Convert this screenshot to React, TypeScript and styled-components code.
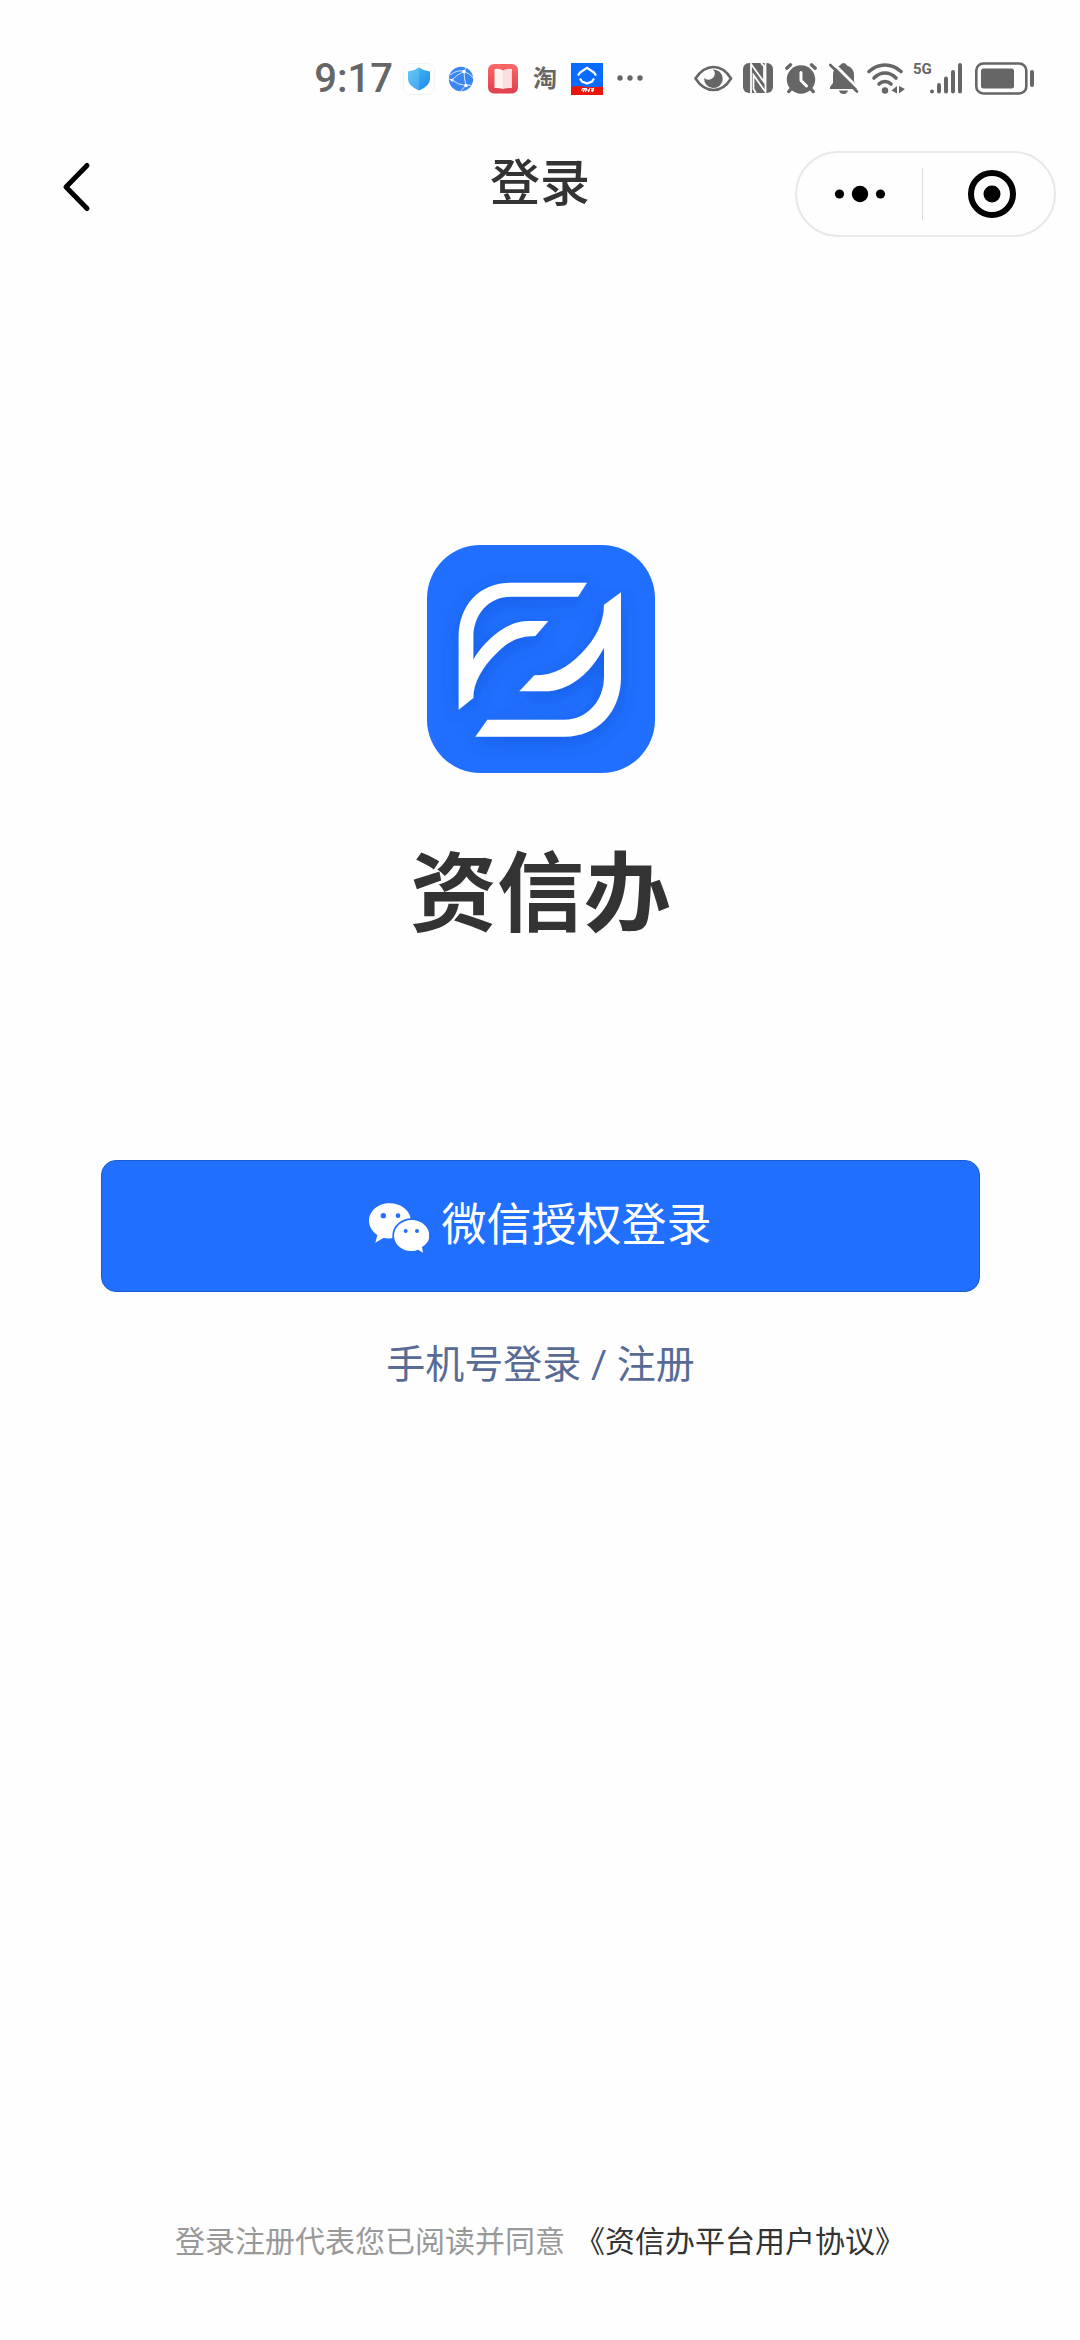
import React from "react";
import styled, { createGlobalStyle } from "styled-components";

const GlobalStyle = createGlobalStyle`
  * { box-sizing: border-box; }
  html, body { margin: 0; padding: 0; background: #fefefe; }
  body {
    font-family: Roboto, "Noto Sans CJK SC", sans-serif;
    color: #333333;
  }
  button { font: inherit; color: inherit; background: none; border: 0; padding: 0; cursor: pointer; }
  a { color: inherit; text-decoration: none; }
  svg { display: block; flex: none; }
`;

const Page = styled.div`
  min-height: 100vh;
  display: flex;
  flex-direction: column;
`;

const StatusBar = styled.div`
  display: flex;
  align-items: center;
  justify-content: flex-end;
  padding: 61px 45px 19px;
  height: 116px;
  color: #666666;
`;

const Clock = styled.time`
  font-size: 40px;
  line-height: 36px;
  font-weight: 500;
  margin-right: 10px;
`;

const IconGroup = styled.div<{ $gap: number }>`
  display: flex;
  align-items: center;
  gap: ${(p) => p.$gap}px;
`;

const TaoBadge = styled.span`
  width: 32px;
  font-size: 24px;
  line-height: 36px;
  font-weight: 700;
  text-align: center;
`;

const SystemIcons = styled(IconGroup)`
  margin-left: 49px;
`;

const NavBar = styled.header`
  display: grid;
  grid-template-columns: 1fr auto 1fr;
  align-items: start;
  padding: 35px 24px 0;
`;

const BackButton = styled.button`
  width: 72px;
  height: 72px;
  display: flex;
  align-items: center;
  justify-content: center;
  margin-left: 16px;
`;

const Title = styled.h1`
  margin: 0;
  font-size: 50px;
  line-height: 66px;
  font-weight: 500;
`;

const Capsule = styled.div`
  justify-self: end;
  display: flex;
  align-items: center;
  width: 261px;
  height: 86px;
  border: 2px solid #e8e8e8;
  border-radius: 43px;
`;

const CapsuleButton = styled.button`
  flex: 1;
  height: 100%;
  display: flex;
  align-items: center;
  justify-content: center;
`;

const CloseButton = styled(CapsuleButton)`
  padding-left: 6px;
`;

const CapsuleDivider = styled.span`
  width: 1px;
  height: 52px;
  background: #dcdcdc;
`;

const Main = styled.main`
  display: flex;
  flex-direction: column;
  align-items: center;
  padding: 308px 100px 0 101px;
`;

const BrandName = styled.h2`
  margin: 72px 0 0;
  font-size: 87px;
  line-height: 100px;
  font-weight: 700;
`;

const WechatButton = styled.button`
  width: 100%;
  height: 132px;
  margin-top: 215px;
  padding-top: 4px;
  display: flex;
  align-items: center;
  justify-content: center;
  gap: 12px;
  background: #206fff;
  border: 1px solid #1b5ccf;
  border-radius: 15px;
  color: #ffffff;
  font-size: 45px;
`;

const ButtonLabel = styled.span`
  line-height: 60px;
  padding-bottom: 4px;
`;

const PhoneLink = styled.a`
  margin-top: 43px;
  font-size: 39px;
  line-height: 60px;
  color: #576b95;
`;

const Footer = styled.footer`
  margin-top: auto;
  padding: 0 24px 76px;
  display: flex;
  justify-content: center;
  gap: 10px;
  font-size: 30px;
  line-height: 44px;
  color: #999999;
`;

const AgreementLink = styled.a`
  color: #333333;
`;

const ShieldIcon = () => (
  <svg width="32" height="36" viewBox="0 0 32 36" aria-hidden="true">
    <defs>
      <linearGradient id="shield" x1="0" x2="1" y1="0" y2="1">
        <stop offset="0" stopColor="#4cc2f5" />
        <stop offset="1" stopColor="#1c86ee" />
      </linearGradient>
    </defs>
    <rect x=".5" y="2.5" width="31" height="31" rx="7" fill="#fff" stroke="#f3f3f3" />
    <path d="M16 6.5Q21 10 27 10.5V18Q27 25 16 29.500Q5 25 5 18V10.500Q11 10 16 6.500Z" fill="url(#shield)" />
    <path d="M16 6.500Q11 10 5 10.500V18Q5 25 16 29.500Z" fill="#fff" opacity=".14" />
  </svg>
);

const GlobeIcon = () => (
  <svg width="32" height="36" viewBox="0 0 32 36" aria-hidden="true">
    <circle cx="16" cy="18" r="12.200" fill="#3c86f2" />
    <g fill="none" stroke="#d5e6ff" strokeWidth="1">
      <path d="M5 14Q13 8 19 10.500Q26 13 28 17" />
      <path d="M19 10.500Q11 14 7 19Q13 24 21 24.500Q19 17 19 10.500Z" />
      <path d="M21 24.500Q18 27 16 30M21 24.500L26 24M7 19L4 18M19 10.500L21 7" />
    </g>
    <g fill="#fff">
      <circle cx="19" cy="10.500" r="1.800" />
      <circle cx="7" cy="19" r="1.500" />
      <circle cx="21" cy="24.500" r="1.800" />
    </g>
  </svg>
);

const BookIcon = () => (
  <svg width="32" height="36" viewBox="0 0 32 36" aria-hidden="true">
    <defs>
      <linearGradient id="book" x1="0" x2="0" y1="0" y2="1">
        <stop offset="0" stopColor="#fb6866" />
        <stop offset="1" stopColor="#df3f4a" />
      </linearGradient>
    </defs>
    <rect x="1" y="3" width="30" height="29.500" rx="6" fill="url(#book)" />
    <path d="M7.500 8Q13 7 16 9.500V28Q12 26.500 7.500 27Z" fill="#fff0f0" />
    <path d="M25 8Q19 7 16 9.500V28Q20 26.500 25 27Z" fill="#fbdde0" />
  </svg>
);

const HouseIcon = () => (
  <svg width="32" height="36" viewBox="0 0 32 36" aria-hidden="true">
    <rect y="2" width="32" height="32" fill="#0a6bff" />
    <g fill="none" stroke="#fff" strokeWidth="2.200">
      <path d="M7 14.500L9 11.500L16 6.800L23 11.500L25 14.500" />
      <path d="M9 17.500L11 20.500L16 22.500L21 20.500L23 17.500" />
    </g>
    <path d="M0 26Q6 24.500 12 25.500T32 25.500V34H0Z" fill="#e9160c" />
    <path d="M11 27.500H14L12 31M10 29H13M15.500 27L14.500 31M14.500 29H18M19 27L17.500 31M20 28L22.500 27.500L21 31M20 29.500H23" fill="none" stroke="#fff" strokeWidth="1.200" />
  </svg>
);

const MoreIcon = () => (
  <svg width="32" height="36" viewBox="0 0 32 36" aria-hidden="true" fill="#666">
    <circle cx="7" cy="17" r="2.700" />
    <circle cx="17" cy="17" r="2.700" />
    <circle cx="27" cy="17" r="2.700" />
  </svg>
);

const EyeIcon = () => (
  <svg width="39" height="36" viewBox="0 0 39 36" aria-hidden="true">
    <path d="M1.500 17.500Q9 6 19.500 6T37 17.500Q30 29 19.500 29T1.500 17.500Z" fill="none" stroke="#666" strokeWidth="2.600" />
    <path d="M19 8.500A9.300 9.300 0 1 1 10.200 17Q12.500 19.500 16 18.500Q20.500 17 20.800 13Q21 10.500 19 8.500Z" fill="#666" />
  </svg>
);

const NfcIcon = () => (
  <svg width="36" height="36" viewBox="0 0 36 36" aria-hidden="true">
    <rect x="2" y="2" width="30" height="30" rx="6" fill="#666" />
    <path d="M10 32V3L23 21V5L20 2" fill="none" stroke="#fefefe" strokeWidth="1.800" />
    <path d="M24.500 2V31L12.500 14V28L15 32" fill="none" stroke="#fefefe" strokeWidth="1.800" />
  </svg>
);

const AlarmIcon = () => (
  <svg width="36" height="36" viewBox="0 0 36 36" aria-hidden="true">
    <circle cx="16" cy="18.500" r="14.200" fill="#666" />
    <g fill="none" stroke="#666" strokeWidth="3.400" strokeLinecap="round">
      <path d="M1.800 7.200L5.500 3.800M30.200 7.200L26.500 3.800M6 28L3.800 30.500M26 28L28.200 30.500" />
    </g>
    <path d="M16 11.500V19.500L21.500 25" fill="none" stroke="#fefefe" strokeWidth="3" strokeLinecap="round" strokeLinejoin="round" />
  </svg>
);

const BellOffIcon = () => (
  <svg width="30" height="36" viewBox="0 0 30 36" aria-hidden="true">
    <path d="M14.500 2Q17 2 18 4.500Q25 7 25 14V20L28 26V28H1V26L4 22V14Q4 6.500 11 4.500Q12 2 14.500 2Z" fill="#666" />
    <path d="M10 29.500H19Q18 33 14.500 33T10 29.500Z" fill="#666" />
    <path d="M3.500 1.500L31.500 29.500" stroke="#fefefe" strokeWidth="3" />
    <path d="M0 0H4L2 16Z" fill="#fefefe" />
    <path d="M1.300 4L28 30.500" stroke="#666" strokeWidth="2.600" strokeLinecap="round" />
  </svg>
);

const WifiIcon = () => (
  <svg width="38" height="36" viewBox="0 0 38 36" aria-hidden="true">
    <g fill="none" stroke="#666" strokeWidth="3.600" strokeLinecap="round">
      <path d="M2 10.500Q9 4 18 4T34 10.500" />
      <path d="M7 17Q12 12 18 12T29 17" />
      <path d="M12 23Q14.500 20.500 18 20.500T24 23" />
    </g>
    <circle cx="18" cy="29.500" r="3.200" fill="#666" />
    <path d="M30 25V32.500L24.500 29.500ZM32 25L38 28L32 32.500Z" fill="#666" />
  </svg>
);

const NetworkLabel = styled.span`
  align-self: flex-start;
  width: 17px;
  font-family: Roboto, sans-serif;
  font-size: 15px;
  line-height: 16px;
  font-weight: 700;
`;

const Network = styled.span`
  display: flex;
  width: 54px;
  height: 36px;
`;

const SignalIcon = () => (
  <svg width="34" height="36" viewBox="0 0 34 36" aria-hidden="true">
    <g stroke="#666" strokeWidth="4" strokeLinecap="round">
      <path d="M2 30.500V30.500M9 30.500V24M16 30.500V17.500M23 30.500V11M30 30.500V4" />
    </g>
  </svg>
);

const BatteryIcon = () => (
  <svg width="60" height="36" viewBox="0 0 60 36" aria-hidden="true">
    <rect x="1.300" y="2.500" width="50" height="30" rx="7" fill="none" stroke="#666" strokeWidth="2.600" />
    <rect x="6" y="7.500" width="33" height="20" rx="2.500" fill="#666" />
    <rect x="55" y="9" width="4" height="17" rx="2" fill="#666" />
  </svg>
);

const BrandLogo = () => (
  <svg width="228" height="228" viewBox="0 0 684 684" role="img" aria-label="资信办">
    <defs>
      <filter id="glow" x="-20%" y="-20%" width="140%" height="140%">
        <feDropShadow dx="0" dy="16" stdDeviation="30" floodColor="#0b3fb0" floodOpacity=".34" />
      </filter>
    </defs>
    <rect width="684" height="684" rx="160" fill="#206fff" />
    <g transform="translate(-48 -44)" fill="#fff" filter="url(#glow)">
      <path d="M143 538V320C143 225 205 157 300 157H528L501 199H300C230 199 187 255 187 320V388C225 325 290 272 350 272H412L373 317C330 317 295 328 255 370C215 410 187 455 187 503Z" />
      <path d="M630 186V440C630 545 560 619 460 619H193L229 568H460C530 568 579 510 579 440V352C535 435 470 483 400 483H325L370 435C430 435 470 410 510 370C555 325 579 275 579 223Z" />
    </g>
  </svg>
);

const WechatIcon = () => (
  <svg width="60" height="60" viewBox="0 0 180 180" aria-hidden="true">
    <g transform="translate(-27 -14)">
      <path d="M89 30C54 30 27 53 27 83C27 100 37 115 52 125L46 148L70 134Q80 136 96 135L152 76C148 50 122 30 89 30Z" fill="#fff" />
      <path d="M155 80C126 80 102 101 102 127S126 173 155 173Q166 173 174 169L189 178L186 161Q208 148 208 127C208 101 184 80 155 80Z" fill="#fff" stroke="#206fff" strokeWidth="10" paintOrder="stroke" />
      <g fill="#206fff">
        <circle cx="70" cy="67" r="8" />
        <circle cx="114" cy="67" r="7" />
        <circle cx="137" cy="113" r="6" />
        <circle cx="171" cy="113" r="6" />
      </g>
    </g>
  </svg>
);

export default function App() {
  return (
    <Page>
      <GlobalStyle />
      <StatusBar>
        <Clock>9:17</Clock>
        <IconGroup $gap={10}>
          <ShieldIcon />
          <GlobeIcon />
          <BookIcon />
          <TaoBadge>淘</TaoBadge>
          <HouseIcon />
          <MoreIcon />
        </IconGroup>
        <SystemIcons $gap={8}>
          <EyeIcon />
          <NfcIcon />
          <AlarmIcon />
          <BellOffIcon />
          <WifiIcon />
          <Network>
            <NetworkLabel>5G</NetworkLabel>
            <SignalIcon />
          </Network>
          <BatteryIcon />
        </SystemIcons>
      </StatusBar>

      <NavBar>
        <BackButton aria-label="返回">
          <svg width="30" height="52" viewBox="0 0 30 52" fill="none" aria-hidden="true">
            <path d="M26 4.500L5 26L26 47.500" stroke="#000" strokeWidth="5" strokeLinecap="round" strokeLinejoin="round" />
          </svg>
        </BackButton>
        <Title>登录</Title>
        <Capsule>
          <CapsuleButton aria-label="更多">
            <svg width="52" height="18" viewBox="0 0 52 18" aria-hidden="true">
              <circle cx="5.500" cy="9" r="4.600" />
              <circle cx="26" cy="9" r="8.200" />
              <circle cx="46.500" cy="9" r="4.600" />
            </svg>
          </CapsuleButton>
          <CapsuleDivider />
          <CloseButton aria-label="关闭">
            <svg width="50" height="50" viewBox="0 0 50 50" aria-hidden="true">
              <circle cx="25" cy="25" r="21" fill="none" stroke="#000" strokeWidth="6" />
              <circle cx="25" cy="25" r="8.500" />
            </svg>
          </CloseButton>
        </Capsule>
      </NavBar>

      <Main>
        <BrandLogo />
        <BrandName>资信办</BrandName>
        <WechatButton>
          <WechatIcon />
          <ButtonLabel>微信授权登录</ButtonLabel>
        </WechatButton>
        <PhoneLink href="#phone">手机号登录 / 注册</PhoneLink>
      </Main>

      <Footer>
        <span>登录注册代表您已阅读并同意</span>
        <AgreementLink href="#agreement">《资信办平台用户协议》</AgreementLink>
      </Footer>
    </Page>
  );
}
